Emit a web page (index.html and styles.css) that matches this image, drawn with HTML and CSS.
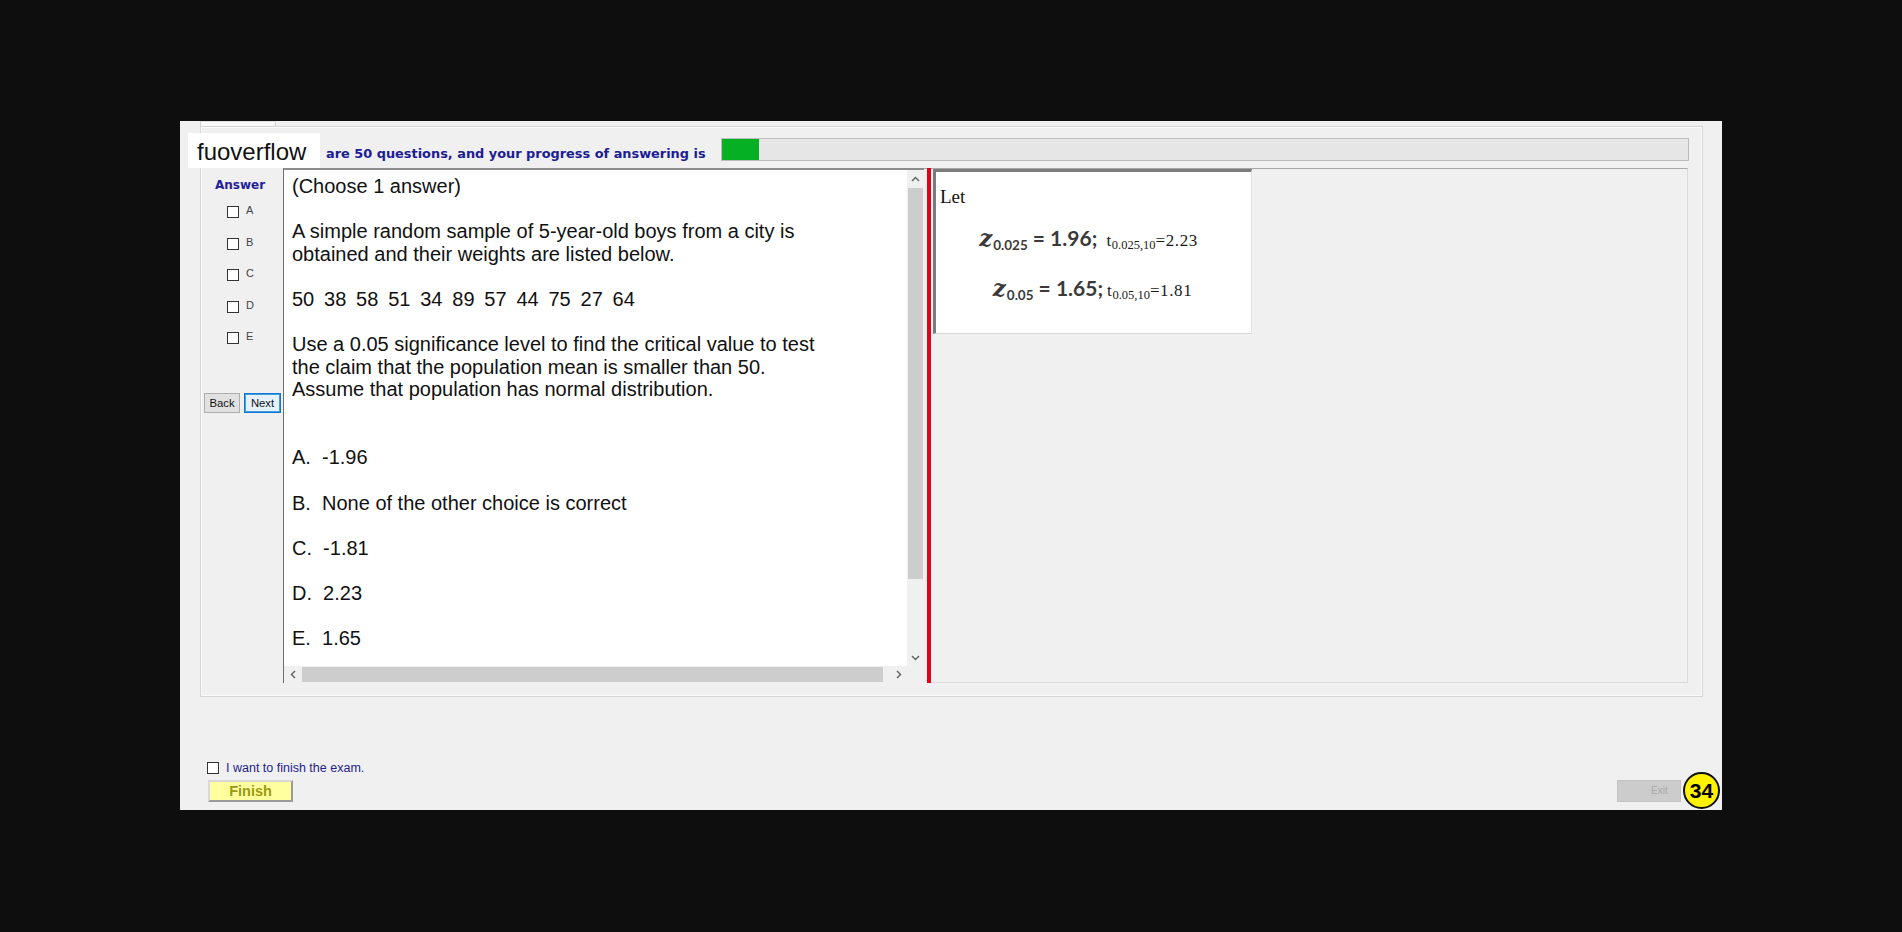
FILE: index.html
```html
<!DOCTYPE html>
<html>
<head>
<meta charset="utf-8">
<title>Exam</title>
<link rel="stylesheet" href="styles.css">
</head>
<body>
<div class="screen">
  <div class="window">
    <div class="tabstrip"><div class="tab"></div></div>
    <div class="group">
      <div class="header">
        <span class="progress-label">are 50 questions, and your progress of answering is</span>
        <div class="progress"><div class="progress-fill" style="width:37px"></div></div>
      </div>
      <div class="main">
        <div class="answer-col">
          <div class="answer-title">Answer</div>
          <div class="choices">
            <div class="choice"><span class="box"></span><span class="letter">A</span></div>
            <div class="choice"><span class="box"></span><span class="letter">B</span></div>
            <div class="choice"><span class="box"></span><span class="letter">C</span></div>
            <div class="choice"><span class="box"></span><span class="letter">D</span></div>
            <div class="choice"><span class="box"></span><span class="letter">E</span></div>
          </div>
          <div class="nav">
            <div class="btn">Back</div>
            <div class="btn btn-focus">Next</div>
          </div>
        </div>
        <div class="question">
          <div class="q-top">
            <div class="q-text"><div class="ln">(Choose 1 answer)</div><div class="ln"> </div><div class="ln">A simple random sample of 5-year-old boys from a city is</div><div class="ln">obtained and their weights are listed below.</div><div class="ln"> </div><div class="ln nums">50  38  58  51  34  89  57  44  75  27  64</div><div class="ln"> </div><div class="ln">Use a 0.05 significance level to find the critical value to test</div><div class="ln">the claim that the population mean is smaller than 50.</div><div class="ln">Assume that population has normal distribution.</div><div class="ln"> </div><div class="ln"> </div><div class="ln">A.  -1.96</div><div class="ln"> </div><div class="ln">B.  None of the other choice is correct</div><div class="ln"> </div><div class="ln">C.  -1.81</div><div class="ln"> </div><div class="ln">D.  2.23</div><div class="ln"> </div><div class="ln">E.  1.65</div></div>
            <div class="vscroll">
              <div class="arrow-v"><svg width="9" height="6" viewBox="0 0 9 6"><path d="M1 5 L4.5 1.5 L8 5" fill="none" stroke="#606060" stroke-width="1.4"/></svg></div>
              <div class="vthumb"></div>
              <div class="vspace"></div>
              <div class="arrow-v"><svg width="9" height="6" viewBox="0 0 9 6"><path d="M1 1 L4.5 4.5 L8 1" fill="none" stroke="#606060" stroke-width="1.4"/></svg></div>
            </div>
          </div>
          <div class="q-bottom">
            <div class="hscroll">
              <div class="arrow-h"><svg width="6" height="9" viewBox="0 0 6 9"><path d="M5 1 L1.5 4.5 L5 8" fill="none" stroke="#606060" stroke-width="1.4"/></svg></div>
              <div class="hthumb"></div>
              <div class="arrow-h"><svg width="6" height="9" viewBox="0 0 6 9"><path d="M1 1 L4.5 4.5 L1 8" fill="none" stroke="#606060" stroke-width="1.4"/></svg></div>
            </div>
            <div class="corner"></div>
          </div>
        </div>
        <div class="gap"></div>
        <div class="splitter"></div>
        <div class="right-pane">
          <div class="hint-box">
            <div class="let">Let</div>
            <div class="eq eq1"><span class="zv">z</span><span class="zsub">0.025</span><span class="zr"> = 1.96; </span><span class="tt">t<span class="tsub">0.025,10</span>=2.23</span></div>
            <div class="eq eq2"><span class="zv">z</span><span class="zsub">0.05</span><span class="zr"> = 1.65;</span><span class="tt">t<span class="tsub">0.05,10</span>=1.81</span></div>
          </div>
        </div>
      </div>
    </div>
    <div class="footer">
      <div class="finish-area">
        <div class="finish-check"><span class="box"></span><span class="finish-label">I want to finish the exam.</span></div>
        <div class="finish-btn">Finish</div>
      </div>
      <div class="exit-area">
        <div class="exit-btn">Exit</div>
        <div class="badge">34</div>
      </div>
    </div>
    <div class="watermark">fuoverflow</div>
  </div>
</div>
</body>
</html>
```
FILE: styles.css
```css
html, body {
  margin: 0;
  padding: 0;
  background: #0e0e0e;
}
body {
  font-family: "Liberation Sans", Arial, sans-serif;
}
.screen {
  width: 1902px;
  height: 932px;
  overflow: hidden;
  padding: 121px 0 0 180px;
  box-sizing: border-box;
}
.window {
  position: relative;
  width: 1542px;
  height: 689px;
  background: #f0f0f0;
}
.tabstrip {
  height: 5px;
}
.tab {
  margin-left: 20px;
  width: 76px;
  height: 5px;
  box-sizing: border-box;
  background: #f8f8f8;
  border-left: 1px solid #d2d2d2;
  border-right: 1px solid #d2d2d2;
  border-top: 1px solid #e0e0e0;
}
.group {
  margin-left: 20px;
  width: 1503px;
  height: 571px;
  box-sizing: border-box;
  border: 1px solid #d6d6d6;
  box-shadow: inset 0 0 0 1px #fbfbfb;
}
.header {
  display: flex;
  align-items: flex-start;
  height: 41px;
  padding-left: 125px;
}
.progress-label {
  margin-top: 19px;
  font-family: "DejaVu Sans", Verdana, sans-serif;
  font-weight: bold;
  font-size: 12.9px;
  line-height: 16px;
  color: #1c1c94;
  white-space: nowrap;
}
.progress {
  margin-left: auto;
  margin-right: 13px;
  margin-top: 11px;
  width: 968px;
  height: 23px;
  box-sizing: border-box;
  border: 1px solid #bcbcbc;
  background: #e6e6e6;
}
.progress-fill {
  height: 100%;
  background: #06b025;
}
.main {
  display: flex;
  height: 515px;
}
.answer-col {
  width: 82px;
  flex: none;
}
.answer-title {
  margin-top: 9px;
  padding-left: 14px;
  font-family: "DejaVu Sans", Verdana, sans-serif;
  font-weight: bold;
  font-size: 12px;
  line-height: 16px;
  color: #1f1f9c;
}
.choices {
  margin-top: 13px;
  padding-left: 26px;
}
.choice {
  display: flex;
  align-items: flex-start;
  height: 31.6px;
}
.box {
  display: block;
  width: 12px;
  height: 12px;
  box-sizing: border-box;
  border: 1px solid #333;
  background: #fff;
  flex: none;
}
.letter {
  margin-left: 7px;
  margin-top: -1px;
  font-size: 11px;
  line-height: 11px;
  color: #444;
}
.nav {
  display: flex;
  gap: 4px;
  margin-top: 29px;
  padding-left: 3px;
}
.btn {
  height: 20px;
  box-sizing: border-box;
  border: 1px solid #adadad;
  background: #e1e1e1;
  font-size: 11.3px;
  line-height: 18px;
  text-align: center;
  color: #111;
}
.btn:first-child {
  width: 36px;
}
.btn-focus {
  width: 37px;
  border: 1px solid #0a78d4;
  box-shadow: inset 0 0 0 1px #4a9be0;
  background: #e5f1fb;
}
.question {
  width: 641px;
  flex: none;
  box-sizing: border-box;
  border-top: 2px solid #8c8c8c;
  border-left: 1px solid #6e6e6e;
  background: #fff;
  display: flex;
  flex-direction: column;
}
.q-top {
  display: flex;
  height: 496px;
}
.q-text {
  flex: 1;
  padding: 5px 0 0 8px;
  font-size: 20px;
  line-height: 22.62px;
  color: #111;
  white-space: pre;
  overflow: hidden;
}
.ln {
  height: 22.62px;
}
.nums {
  word-spacing: -0.65px;
}
.vscroll {
  width: 17px;
  flex: none;
  background: #f0f0f0;
  display: flex;
  flex-direction: column;
}
.arrow-v {
  height: 17px;
  display: flex;
  align-items: center;
  justify-content: center;
}
.vthumb {
  margin: 1px 1px 0;
  height: 391px;
  background: #cdcdcd;
}
.vspace {
  flex: 1;
}
.q-bottom {
  display: flex;
  height: 17px;
}
.hscroll {
  flex: 1;
  display: flex;
  background: #f0f0f0;
}
.arrow-h {
  width: 17px;
  display: flex;
  align-items: center;
  justify-content: center;
}
.hthumb {
  margin: 1px 7px 1px 1px;
  width: 581px;
  background: #cdcdcd;
}
.hscroll .arrow-h:last-child {
  margin-left: auto;
}
.corner {
  width: 17px;
  background: #f0f0f0;
}
.gap {
  width: 3px;
  flex: none;
  border-top: 1px solid #a8a8a8;
}
.splitter {
  width: 4px;
  flex: none;
  background: #e2001a;
}
.right-pane {
  width: 757px;
  flex: none;
  box-sizing: border-box;
  border-top: 1px solid #a8a8a8;
  border-right: 1px solid #dadada;
  border-bottom: 1px solid #dadada;
  padding-left: 2px;
}
.hint-box {
  width: 319px;
  height: 165px;
  box-sizing: border-box;
  background: #fff;
  border-top: 3px solid #7b7b7b;
  border-left: 3px solid #7b7b7b;
  border-right: 1px solid #e2e2e2;
  border-bottom: 1px solid #d8d8d8;
  padding: 14px 0 0 4px;
}
.let {
  font-family: "Liberation Serif", "Times New Roman", serif;
  font-size: 19px;
  line-height: 22px;
  color: #111;
}
.eq {
  height: 30px;
  line-height: 30px;
  white-space: nowrap;
  text-align: center;
  padding-right: 4px;
}
.eq1 {
  margin-top: 15px;
  padding-right: 14px;
}
.eq2 {
  margin-top: 20px;
  padding-right: 6px;
}
.zv {
  font-family: "DejaVu Serif", serif;
  font-style: italic;
  font-weight: bold;
  font-size: 23px;
  color: #3a3a3a;
}
.zsub {
  font-family: Lato, "Open Sans", sans-serif;
  font-weight: bold;
  font-size: 13.5px;
  color: #3a3a3a;
  vertical-align: -4px;
  margin-left: 1px;
}
.zr {
  font-family: Lato, "Open Sans", sans-serif;
  font-weight: bold;
  font-size: 21px;
  color: #3a3a3a;
  white-space: pre;
}
.tt {
  font-family: "Liberation Serif", "Times New Roman", serif;
  font-size: 17px;
  letter-spacing: 0.6px;
  color: #1a1a1a;
  margin-left: 4px;
}
.tsub {
  font-size: 12.5px;
  letter-spacing: 0;
  vertical-align: -3px;
}
.footer {
  display: flex;
  justify-content: space-between;
  height: 113px;
  padding: 0 2px 0 27px;
}
.finish-area {
  margin-top: 65px;
}
.finish-check {
  display: flex;
  align-items: center;
  gap: 7px;
  height: 12px;
}
.finish-label {
  font-size: 12.5px;
  line-height: 14px;
  color: #1e1e8c;
  white-space: nowrap;
}
.finish-btn {
  margin-top: 6px;
  margin-left: 1px;
  width: 85px;
  height: 22px;
  box-sizing: border-box;
  background: #ffffa0;
  border: 2px solid;
  border-color: #d8d8d8 #9a9a9a #9a9a9a #d8d8d8;
  font-weight: bold;
  font-size: 14.5px;
  line-height: 18px;
  text-align: center;
  color: #9a9a12;
}
.exit-area {
  display: flex;
  align-items: flex-start;
  gap: 2px;
}
.exit-btn {
  margin-top: 83px;
  width: 64px;
  height: 22px;
  box-sizing: border-box;
  border: 1px solid #c2c2c2;
  background: #cccccc;
  font-size: 10px;
  line-height: 20px;
  color: #a8a8a8;
  padding-left: 33px;
}
.badge {
  margin-top: 75px;
  width: 37px;
  height: 37px;
  box-sizing: border-box;
  border-radius: 50%;
  border: 2px solid #111;
  background: #fff200;
  font-weight: bold;
  font-size: 21px;
  line-height: 33px;
  text-align: center;
  color: #000;
}
.watermark {
  position: absolute;
  left: 8px;
  top: 12px;
  width: 132px;
  height: 35px;
  box-sizing: border-box;
  background: #fff;
  padding-left: 9px;
  font-size: 24px;
  line-height: 37px;
  color: #111;
}
```
